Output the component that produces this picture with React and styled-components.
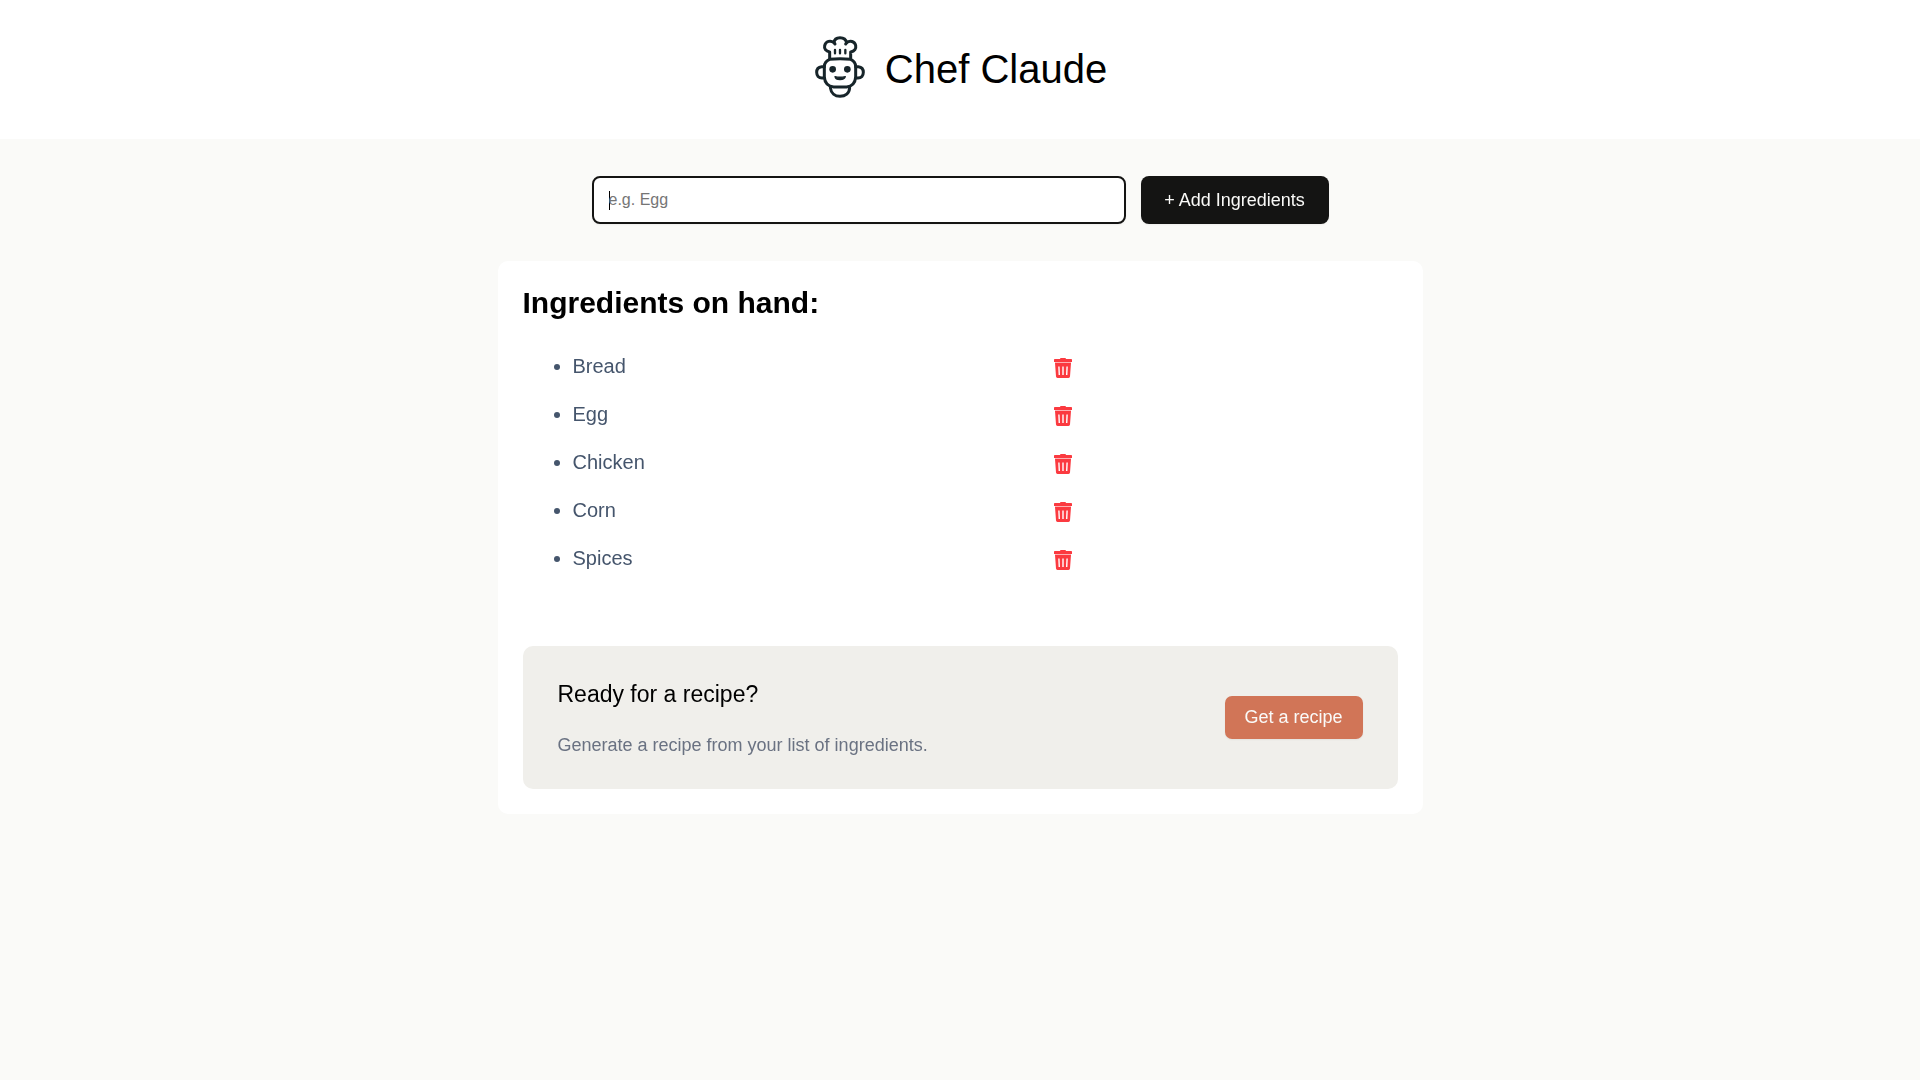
import React, { useState } from "react";
import styled, { createGlobalStyle } from "styled-components";

const GlobalStyle = createGlobalStyle`
  *, *::before, *::after { box-sizing: border-box; }
  body {
    margin: 0;
    background: #fafaf8;
    color: #000;
    font-family: "Liberation Sans", Arial, sans-serif;
  }
  h1, h2, h3, p, ul { margin: 0; }
  button, input { font-family: inherit; }
`;

const Header = styled.header`
  display: flex;
  align-items: center;
  justify-content: center;
  gap: 20px;
  padding: 36px 20px 41px 22px;
  background: #fff;
`;

const Logo = styled.svg`
  display: block;
  width: 50px;
  height: 62px;
`;

const Title = styled.h1`
  padding-top: 4px;
  font-size: 40px;
  line-height: 48px;
  font-weight: 400;
`;

const Main = styled.main`
  display: flex;
  flex-direction: column;
  align-items: center;
  gap: 37px;
  padding: 37px 20px;
`;

const Form = styled.form`
  display: flex;
  gap: 15px;
  width: 100%;
  max-width: 737px;
`;

const TextInput = styled.input`
  flex: 1;
  min-width: 0;
  height: 48px;
  padding: 0 15px;
  border: 2px solid #d1d5dc;
  border-radius: 8px;
  background: #fff;
  box-shadow: 0 1px 2px rgba(0, 0, 0, 0.05);
  font-size: 16px;
  color: #000;
  outline: none;

  &::placeholder { color: #757575; }
  &:focus { border-color: #141413; }
  /* steady caret while the field is empty */
  &:focus:placeholder-shown {
    caret-color: transparent;
    background: linear-gradient(#000, #000) 15px 13px / 1px 19px no-repeat #fff;
  }
`;

const Button = styled.button`
  flex: none;
  width: ${(p) => (p.$accent ? 138 : 188)}px;
  height: ${(p) => (p.$accent ? 43 : 48)}px;
  padding: 0;
  border: 0;
  border-radius: ${(p) => (p.$accent ? 7 : 8)}px;
  background: ${(p) => (p.$accent ? "#d17557" : "#141413")};
  box-shadow: 0 1px 2px rgba(0, 0, 0, 0.05);
  color: #fafaf8;
  font-size: 18px;
  white-space: nowrap;
  cursor: pointer;
`;

const Card = styled.section`
  width: 100%;
  max-width: 925px;
  padding: 25px;
  border-radius: 10px;
  background: #fff;
`;

const CardTitle = styled.h2`
  font-size: 30px;
  line-height: 34px;
  font-weight: 700;
`;

const List = styled.ul`
  padding: 22px 0 64px 50px;
  color: #45556c;
  font-size: 20px;
`;

const Item = styled.li`
  line-height: 48px;
`;

const ItemRow = styled.div`
  display: flex;
  align-items: center;
  justify-content: space-between;
  max-width: 500px;
`;

const DeleteButton = styled.button`
  display: flex;
  padding: 4px 0 0;
  border: 0;
  background: none;
  color: #fb3a40;
  cursor: pointer;
`;

const Panel = styled.section`
  display: flex;
  align-items: center;
  justify-content: space-between;
  padding: 33px 35px;
  border-radius: 10px;
  background: #f0efeb;
`;

const PanelText = styled.div`
  display: flex;
  flex-direction: column;
  gap: 24px;
`;

const PanelTitle = styled.h3`
  font-size: 23px;
  line-height: 31px;
  font-weight: 400;
`;

const PanelNote = styled.p`
  color: #6a7282;
  font-size: 18px;
  line-height: 22px;
`;

function ChefLogo() {
  return (
    <Logo viewBox="44 34 150 186" fill="none" stroke="#17252a" strokeWidth="9" strokeLinecap="round" strokeLinejoin="round" aria-hidden="true">
      <path d="M88 102V82C76 80 71 72 73 63C76 49 91 46 101 54C102 44 110 39 119 39C128 39 137 44 139 54C149 46 163 50 166 62C168 72 163 80 151 82V102" />
      <path d="M101 54L104 58M139 54L136 58" />
      <path d="M104 76V86M119 76V86M135 76V86" strokeWidth="7" />
      <path d="M88 104Q119 101 151 104Q165 110 166 125V157Q164 184 139 187H100Q74 184 72 157V125Q73 110 88 104Z" />
      <path d="M72 126H64C54 127 49 134 49 143C49 153 55 160 65 160H72" />
      <path d="M166 126H174C184 127 189 134 189 143C189 153 183 160 173 160H166" />
      <path d="M90 189C92 206 104 215 119 215C135 215 147 206 148 189" />
      <circle cx="97" cy="134" r="10" fill="#17252a" stroke="none" />
      <circle cx="141" cy="134" r="10" fill="#17252a" stroke="none" />
      <path d="M104 156C112 158 126 158 135 156C133 163 128 165 119 165C110 165 105 162 104 156Z" fill="#17252a" strokeWidth="4" />
    </Logo>
  );
}

function TrashIcon() {
  return (
    <svg width="20" height="20" viewBox="0 0 20 20" fill="currentColor" aria-hidden="true">
      <path d="M7 1Q7 0 8 0H12Q13 0 13 1H18.200Q19 1 19 1.800V4H1V1.800Q1 1 1.800 1Z" />
      <path d="M2 4H18V5H2Z" opacity="0.4" />
      <path fillRule="evenodd" d="M2 5H18L17 18.600Q16.900 20 15.500 20H4.500Q3.100 20 3 18.600ZM5.200 8.500L5.600 17H7L6.600 8.500ZM9.300 8.500V17H10.700V8.500ZM13.400 8.500L13 17H14.400L14.800 8.500Z" />
    </svg>
  );
}

export default function App() {
  const [ingredients, setIngredients] = useState(["Bread", "Egg", "Chicken", "Corn", "Spices"]);
  const [draft, setDraft] = useState("");

  const addIngredient = (event) => {
    event.preventDefault();
    const name = draft.trim();
    if (name) setIngredients([...ingredients, name]);
    setDraft("");
  };

  return (
    <>
      <GlobalStyle />
      <Header>
        <ChefLogo />
        <Title>Chef Claude</Title>
      </Header>
      <Main>
        <Form onSubmit={addIngredient}>
          <TextInput
            autoFocus
            type="text"
            aria-label="Add ingredient"
            placeholder="e.g. Egg"
            value={draft}
            onChange={(event) => setDraft(event.target.value)}
          />
          <Button type="submit">+ Add Ingredients</Button>
        </Form>
        <Card>
          <CardTitle>Ingredients on hand:</CardTitle>
          <List>
            {ingredients.map((name, index) => (
              <Item key={name + index}>
                <ItemRow>
                  {name}
                  <DeleteButton
                    type="button"
                    aria-label={"Delete " + name}
                    onClick={() => setIngredients(ingredients.filter((_, i) => i !== index))}
                  >
                    <TrashIcon />
                  </DeleteButton>
                </ItemRow>
              </Item>
            ))}
          </List>
          <Panel>
            <PanelText>
              <PanelTitle>Ready for a recipe?</PanelTitle>
              <PanelNote>Generate a recipe from your list of ingredients.</PanelNote>
            </PanelText>
            <Button type="button" $accent>Get a recipe</Button>
          </Panel>
        </Card>
      </Main>
    </>
  );
}
